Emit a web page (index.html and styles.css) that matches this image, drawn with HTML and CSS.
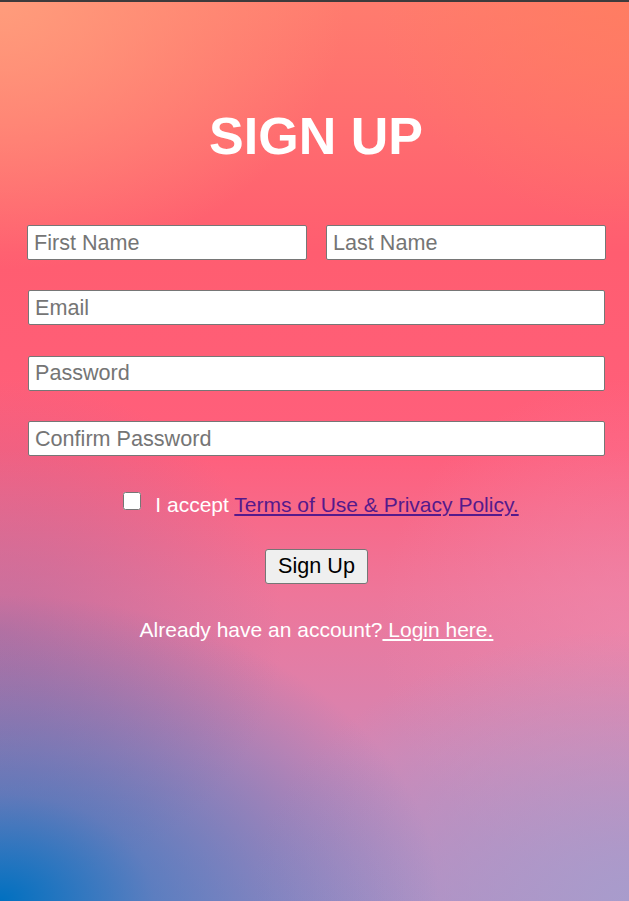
FILE: index.html
```html
<!DOCTYPE html>
<html lang="en">
<head>
<meta charset="utf-8">
<title>Sign Up</title>
<link rel="stylesheet" href="styles.css">
</head>
<body>
<div class="page">
  <h1 class="title">SIGN UP</h1>
  <form class="form">
    <div class="row">
      <input class="field" type="text" placeholder="First Name">
      <input class="field" type="text" placeholder="Last Name">
    </div>
    <input class="field" type="email" placeholder="Email">
    <input class="field" type="password" placeholder="Password">
    <input class="field" type="password" placeholder="Confirm Password">
    <label class="terms">
      <input class="check" type="checkbox">
      <span class="terms-text">I accept <a class="terms-link" href="#">Terms of Use &amp; Privacy Policy.</a></span>
    </label>
    <div class="actions">
      <button class="btn" type="button">Sign Up</button>
    </div>
    <p class="login">Already have an account?<a class="login-link" href="#"> Login here.</a></p>
  </form>
</div>
</body>
</html>
```

FILE: styles.css
```css
html, body {
  margin: 0;
  padding: 0;
}
body {
  min-height: 100vh;
  box-sizing: border-box;
  border-top: 2px solid #3d3b3c;
  font-family: "Liberation Sans", Arial, sans-serif;
  color: #fff;
  background:
    radial-gradient(ellipse 70% 34% at 0% 100%, rgba(0,112,192,1) 0%, rgba(0,112,192,0.5) 35%, rgba(0,112,192,0) 100%),
    radial-gradient(ellipse 60% 30% at 100% 100%, rgba(168,156,204,1) 0%, rgba(168,156,204,0) 100%),
    radial-gradient(ellipse 45% 28% at 0% 70%, rgba(165,105,160,0.55) 0%, rgba(165,105,160,0) 100%),
    radial-gradient(ellipse 40% 28% at 100% 70%, rgba(240,140,175,0.6) 0%, rgba(240,140,175,0) 100%),
    radial-gradient(ellipse 55% 30% at 0% 0%, rgba(255,160,125,0.9) 0%, rgba(255,160,125,0) 100%),
    radial-gradient(ellipse 40% 25% at 100% 0%, rgba(255,125,95,0.8) 0%, rgba(255,125,95,0) 100%),
    linear-gradient(to bottom, #ff7c6e 0%, #ff5d70 28%, #ff5f7c 50%, #ee769a 66%, #d486b4 84%, #b88cc0 100%);
}
.page {
  padding-top: 104px;
}
.title {
  margin: 0;
  text-align: center;
  font-size: 52px;
  font-weight: bold;
  line-height: 60px;
  padding-left: 3px;
}
.form {
  width: 577px;
  margin: 59px 0 0 28px;
  display: flex;
  flex-direction: column;
  gap: 30.4px;
}
.row {
  display: flex;
  gap: 19px;
  margin-left: -1px;
}
.field {
  box-sizing: border-box;
  width: 100%;
  height: 35px;
  margin: 0;
  padding: 3px 6px;
  font-family: "Liberation Sans", Arial, sans-serif;
  font-size: 21.6px;
  color: #222;
  background: #fff;
  border: 1px solid #767676;
  border-radius: 2px;
}
.row .field {
  width: 280px;
}
.field::placeholder {
  color: #757575;
}
.terms {
  display: flex;
  justify-content: center;
  align-items: flex-start;
  gap: 14px;
  margin-top: 6px;
  font-size: 21px;
  line-height: 23px;
  padding-left: 9px;
}
.check {
  width: 18px;
  height: 18px;
  margin: -1px 0 0 0;
}
.terms-link {
  color: #551a8b;
}
.actions {
  display: flex;
  justify-content: center;
  margin-top: 3px;
}
.btn {
  box-sizing: border-box;
  height: 35px;
  padding: 3px 12px;
  font-family: "Liberation Sans", Arial, sans-serif;
  font-size: 21.6px;
  color: #000;
  background: #efefef;
  border: 1px solid #767676;
  border-radius: 3px;
}
.login {
  margin: 4px 0 0 0;
  text-align: center;
  font-size: 21px;
  line-height: 23px;
}
.login-link {
  color: #fff;
}
```
